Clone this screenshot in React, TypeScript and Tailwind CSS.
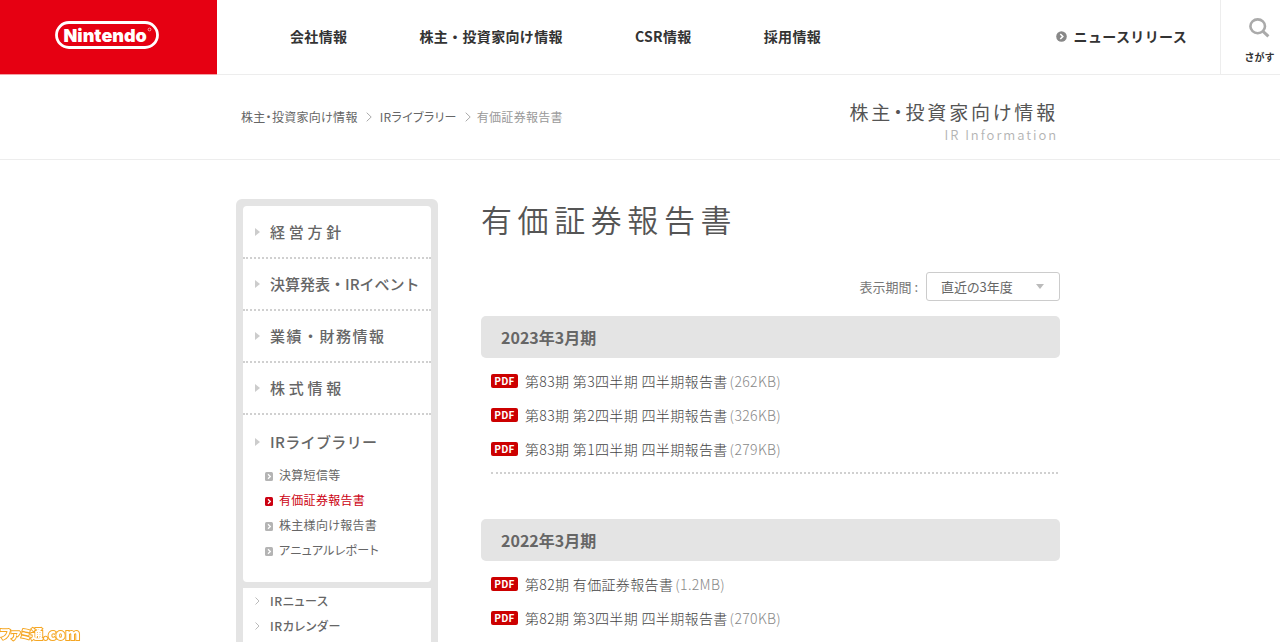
import { useState } from 'react'
import clsx from 'clsx'

type Report = { title: string; size: string }
type Period = { label: string; reports: Report[] }

const globalNav = ['会社情報', '株主・投資家向け情報', 'CSR情報', '採用情報']

const sideNav = [
  { label: '経営方針', style: 'tracking-[0.25em]' },
  { label: '決算発表・IRイベント', style: '' },
  { label: '業績・財務情報', style: 'tracking-widest' },
  { label: '株式情報', style: 'tracking-[0.25em]' },
]

const library = ['決算短信等', '有価証券報告書', '株主様向け報告書', 'アニュアルレポート']

const subNav = ['IRニュース', 'IRカレンダー']

const periods: Period[] = [
  {
    label: '2023年3月期',
    reports: [
      { title: '第83期 第3四半期 四半期報告書', size: '262KB' },
      { title: '第83期 第2四半期 四半期報告書', size: '326KB' },
      { title: '第83期 第1四半期 四半期報告書', size: '279KB' },
    ],
  },
  {
    label: '2022年3月期',
    reports: [
      { title: '第82期 有価証券報告書', size: '1.2MB' },
      { title: '第82期 第3四半期 四半期報告書', size: '270KB' },
    ],
  },
]

function Logo() {
  return (
    <svg width="104" height="28" viewBox="0 0 104 28" role="img" aria-label="Nintendo">
      <rect x="1.5" y="1.5" width="101" height="25" rx="12.5" fill="none" stroke="#fff" strokeWidth="2.8" />
      <text x="8.5" y="20.5" fill="#fff" fontFamily="Inter, 'Liberation Sans', sans-serif" fontSize="18" fontWeight="900">
        Nintendo
      </text>
      <circle cx="94.5" cy="8.5" r="1.4" fill="none" stroke="#fff" strokeWidth="0.6" />
    </svg>
  )
}

function Chevron({ className }: { className?: string }) {
  return (
    <svg className={className} width="6" height="10" viewBox="0 0 6 10" fill="none" stroke="currentColor" aria-hidden="true">
      <path d="M.7.7 5.2 5 .7 9.3" />
    </svg>
  )
}

function Header() {
  return (
    <header className="flex h-[75px] border-b border-[#ededed]">
      <a href="#" className="-mb-px flex w-[217px] shrink-0 items-center border-b border-[#f3a0a5] bg-[#e60012] pb-1 pl-[55px]">
        <Logo />
      </a>
      <nav className="flex flex-1 items-center justify-between pr-[33px] pb-0.5 pl-[73px] text-[14px] font-bold tracking-wide text-[#333] [font-feature-settings:normal]">
        <ul className="flex gap-[72px]">
          {globalNav.map((label) => (
            <li key={label}>
              <a href="#">{label}</a>
            </li>
          ))}
        </ul>
        <a href="#" className="flex items-center gap-[7px]">
          <svg width="11" height="11" viewBox="0 0 11 11" aria-hidden="true">
            <circle cx="5.5" cy="5.5" r="5.3" fill="#888" />
            <path d="M4.3 3 6.8 5.5 4.3 8" fill="none" stroke="#fff" strokeWidth="1.6" />
          </svg>
          ニュースリリース
        </a>
      </nav>
      <button type="button" className="flex w-[60px] shrink-0 flex-col items-center gap-3 border-l border-[#ededed] pt-[18px] pl-[18px] text-[#333]">
        <svg width="21" height="20" viewBox="0 0 21 20" fill="none" stroke="#aaa" aria-hidden="true">
          <ellipse cx="8.7" cy="8.3" rx="7.3" ry="6.9" strokeWidth="2.6" />
          <path d="m14 13.3 5.4 5" strokeWidth="3" />
        </svg>
        <span className="text-[10px] leading-[14px] font-bold whitespace-nowrap [font-feature-settings:normal]">さがす</span>
      </button>
    </header>
  )
}

function SubHeader() {
  return (
    <div className="border-b border-[#ededed]">
      <div className="mx-auto flex h-[84px] max-w-[840px] items-center justify-between pl-[21px]">
        <nav aria-label="パンくず" className="text-[12px] tracking-wide text-[#666]">
          <ol className="flex items-center gap-2">
            <li>
              <a href="#">株主・投資家向け情報</a>
            </li>
            <li className="flex items-center gap-2">
              <Chevron className="text-[#aaa]" />
              <a href="#">IRライブラリー</a>
            </li>
            <li className="flex items-center gap-1.5 text-[#999]">
              <Chevron className="text-[#aaa]" />
              有価証券報告書
            </li>
          </ol>
        </nav>
        <div className="pt-3 pr-0.5 text-right">
          <p className="text-[19px] leading-6 tracking-[0.15em] text-[#555]">株主・投資家向け情報</p>
          <p className="text-[13px] leading-[22px] font-[350] tracking-[0.15em] text-[#b4b4b4]">IR Information</p>
        </div>
      </div>
    </div>
  )
}

function SideArrow() {
  return (
    <svg width="5" height="8" viewBox="0 0 5 8" fill="#ccc" aria-hidden="true">
      <path d="M0 0 5 4 0 8Z" />
    </svg>
  )
}

function Sidebar() {
  return (
    <aside className="flex w-[202px] shrink-0 flex-col gap-1.5 rounded-t-md bg-[#e4e4e4] px-[7px] pt-[7px] text-[#666]">
      <nav className="rounded bg-white pt-px pb-5">
        <ul className="text-[15px] font-medium [font-feature-settings:normal]">
          {sideNav.map((item) => (
            <li key={item.label} className="border-b-2 border-dotted border-[#d0d0d0]">
              <a href="#" className={clsx('flex h-[50px] items-center gap-[10px] pl-3 whitespace-nowrap', item.style)}>
                <SideArrow />
                {item.label}
              </a>
            </li>
          ))}
          <li>
            <a href="#" className="flex h-12 items-center gap-[10px] pt-1.5 pl-3 tracking-wide">
              <SideArrow />
              IRライブラリー
            </a>
          </li>
        </ul>
        <ul className="-mt-px pl-[22px] text-[12px] leading-[25px] tracking-wide">
          {library.map((label, i) => (
            <li key={label}>
              <a href="#" className={clsx('flex items-center gap-1.5', i === 1 ? 'text-[#cc0011]' : 'text-[#666]')}>
                <svg className="mt-1" width="8" height="9" viewBox="0 0 8 9" aria-hidden="true">
                  <rect width="8" height="9" rx="1.5" fill={i === 1 ? '#cc0011' : '#b4b4b4'} />
                  <path d="M3 2.3 5.3 4.5 3 6.7" fill="none" stroke="#fff" strokeWidth="1.3" />
                </svg>
                {label}
              </a>
            </li>
          ))}
        </ul>
      </nav>
      <ul className="flex-1 bg-white text-[12px] leading-[25px] font-medium tracking-wider">
        {subNav.map((label) => (
          <li key={label}>
            <a href="#" className="flex items-center gap-[10px] pl-3">
              <svg width="5" height="8" viewBox="0 0 5 8" fill="none" stroke="#bbb" aria-hidden="true">
                <path d="M.5.5 4 4 .5 7.5" />
              </svg>
              {label}
            </a>
          </li>
        ))}
      </ul>
    </aside>
  )
}

function ReportPeriod({ label, reports }: Period) {
  return (
    <section className="group">
      <h2 className="rounded-[5px] bg-[#e4e4e4] px-5 text-[16px] leading-[42px] font-bold text-[#666]">{label}</h2>
      <ul className="mr-0.5 ml-2.5 border-b-2 border-dotted border-[#d0d0d0] py-1.5 group-last:border-b-0">
        {reports.map((report) => (
          <li key={report.title} className="flex h-[34px] items-center gap-[7px]">
            <span className="w-[27px] rounded-[2px] bg-[#c00] text-center text-[10px] leading-[14px] font-bold tracking-wide text-white">
              PDF
            </span>
            <a href="#" className="text-[14px] font-light tracking-wide text-[#444]">
              {report.title}
              <span className="pl-0.5 text-[#888]">({report.size})</span>
            </a>
          </li>
        ))}
      </ul>
    </section>
  )
}

export default function App() {
  const [range, setRange] = useState('3')

  return (
    <div className="flex min-h-screen flex-col bg-white font-['Noto_Sans_CJK_JP',sans-serif] [font-feature-settings:'palt']">
      <Header />
      <SubHeader />
      <div className="mx-auto flex w-full max-w-[840px] flex-1 gap-[43px] pt-[39px] pl-4">
        <Sidebar />
        <main className="flex-1">
          <h1 className="text-[31px] leading-10 font-[350] tracking-[0.18em] text-[#555]">有価証券報告書</h1>
          <div className="mt-[33px] mb-[15px] flex items-center justify-end gap-2 text-[13px] text-[#666]">
            <label htmlFor="range" className="text-[#777]">
              表示期間 :
            </label>
            <div className="relative">
              <select
                id="range"
                className="block h-[29px] w-[134px] appearance-none rounded-[3px] border border-[#ccc] bg-white pl-3.5 text-[13px]"
                value={range}
                onChange={(e) => setRange(e.target.value)}
              >
                <option value="3">直近の3年度</option>
                <option value="all">すべて</option>
              </select>
              <svg
                className="pointer-events-none absolute top-3 right-4"
                width="8"
                height="5"
                viewBox="0 0 8 5"
                fill="#bbb"
                aria-hidden="true"
              >
                <path d="M0 0H8L4 5Z" />
              </svg>
            </div>
          </div>
          <div className="flex flex-col gap-[45px]">
            {periods.map((period) => (
              <ReportPeriod key={period.label} {...period} />
            ))}
          </div>
        </main>
      </div>
      <div className="fixed bottom-0 left-0 flex items-end leading-4 font-black text-white [paint-order:stroke_fill] [-webkit-text-stroke:2px_#f5a623]">
        <span className="text-[12px]">ファミ通</span>
        <span className="text-[15px]">.com</span>
      </div>
    </div>
  )
}
